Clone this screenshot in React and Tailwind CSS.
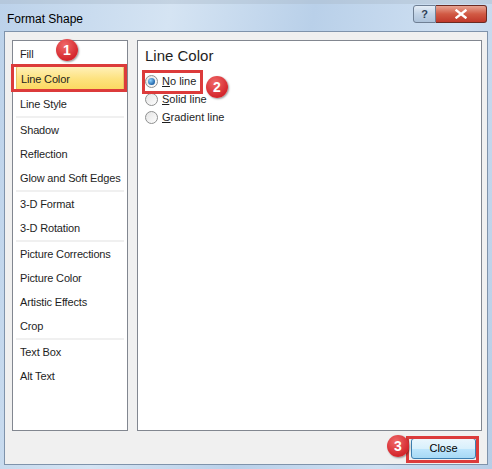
import React from 'react';

const groups = [
  ['Fill', 'Line Color', 'Line Style'],
  ['Shadow', 'Reflection', 'Glow and Soft Edges'],
  ['3-D Format', '3-D Rotation'],
  ['Picture Corrections', 'Picture Color', 'Artistic Effects', 'Crop'],
  ['Text Box', 'Alt Text'],
];

function Badge({ n, className }) {
  return (
    <div
      className={
        'absolute w-[22px] h-[22px] rounded-full bg-[radial-gradient(circle_at_40%_30%,#f06a6a,#d4262c_70%)] shadow-[1px_1px_2px_rgba(0,0,0,0.4)] flex items-center justify-center text-white text-[14px] font-bold ' +
        className
      }
    >
      {n}
    </div>
  );
}

function Radio({ checked, u, rest }) {
  return (
    <div className="flex items-center h-[18px] gap-[4px]">
      <div className="w-[13px] h-[13px] rounded-full border border-[#8e8f8f] bg-[linear-gradient(135deg,#e4e4e4,#fdfdfd)] flex items-center justify-center">
        {checked && <div className="w-[7px] h-[7px] rounded-full bg-[radial-gradient(circle_at_35%_35%,#8fd3ff,#1a5fa5_75%)]" />}
      </div>
      <span className="text-[11px] text-[#1e1e1e] whitespace-nowrap">
        <span className="underline">{u}</span>
        {rest}
      </span>
    </div>
  );
}

export default function App() {
  return (
    <div
      className="w-[492px] h-[469px] relative overflow-hidden flex flex-col bg-[linear-gradient(100deg,#bcd2ea_0%,#d5e4f3_30%,#b9d0e9_55%,#cfe0f2_80%,#b7cde6_100%)]"
      style={{ fontFamily: '"Liberation Sans", Arial, sans-serif' }}
    >
      {/* title bar */}
      <div className="h-[31px] flex items-start justify-between pl-[7px] pr-[5px] relative">
        <div className="absolute left-0 right-0 top-0 h-[4px] bg-[#a9b8c9]/40" />
        <span className="mt-[10px] text-[12px] text-black">Format Shape</span>
        <div className="flex mt-[5px]">
          <div className="w-[23px] h-[18px] rounded-l-[3px] border border-[#6f7f94] bg-[linear-gradient(#e6eef7,#c2d3e6_50%,#aec3da)] flex items-center justify-center text-[11px] font-bold text-[#2d3e55]">
            ?
          </div>
          <div className="w-[51px] h-[18px] rounded-r-[3px] border border-l-0 border-[#6b2a22] bg-[linear-gradient(#e8a493,#d15a44_50%,#c0382a)] flex items-center justify-center">
            <svg width="12" height="10" viewBox="0 0 12 10">
              <path d="M1.5 1.5 L10.5 8.5 M10.5 1.5 L1.5 8.5" stroke="#fff" strokeWidth="2.4" strokeLinecap="square" />
            </svg>
          </div>
        </div>
      </div>

      {/* client area */}
      <div className="flex-1 mx-[4px] mb-[4px] bg-[#f0f0f0] border border-[#7f93ab] flex flex-col">
        <div className="flex gap-[9px] pl-[7px] pr-[5px] pt-[8px]">
          {/* list */}
          <div className="w-[116px] h-[391px] bg-white border border-[#828790] px-[1px] pt-[1px]">
            {groups.map((g, gi) => (
              <div key={gi} className={gi > 0 ? 'border-t-2 border-[#f0f0f0] mx-[2px]' : 'mx-[2px]'}>
                {g.map((item) => (
                  <div
                    key={item}
                    className={
                      'h-[24px] flex items-center pl-[4px] text-[11px] text-[#1e1e1e] whitespace-nowrap tracking-[-0.15px] ' +
                      (item === 'Line Color'
                        ? 'rounded-[2px] border border-[#e5c365] bg-[linear-gradient(#fff0b8,#fde27e_50%,#fbd65c)] h-[26px]'
                        : '')
                    }
                  >
                    {item}
                  </div>
                ))}
              </div>
            ))}
          </div>

          {/* right panel */}
          <div className="flex-1 h-[391px] bg-white border border-[#828790] pl-[7px] pt-[5px]">
            <div className="text-[15px] text-[#1e1e1e] leading-[20px]">Line Color</div>
            <div className="mt-[6px] flex flex-col">
              <Radio checked u="N" rest="o line" />
              <Radio u="S" rest="olid line" />
              <Radio u="G" rest="radient line" />
            </div>
          </div>
        </div>

        <div className="flex justify-end pr-[11px] pt-[7px]">
          <div className="w-[65px] h-[21px] rounded-[3px] border border-[#3c7fb1] bg-[linear-gradient(#eaf6fd,#d9f0fc_50%,#bee6fd_51%,#a7d9f5)] flex items-center justify-center text-[11px] text-black">
            Close
          </div>
        </div>
      </div>

      {/* annotations */}
      <div className="absolute left-[11px] top-[64px] w-[116px] h-[28px] border-[3px] border-[#dc3b3b]" />
      <div className="absolute left-[142px] top-[70px] w-[61px] h-[24px] border-[3px] border-[#dc3b3b]" />
      <div className="absolute left-[406px] top-[436px] w-[73px] h-[27px] border-[3px] border-[#dc3b3b]" />
      <Badge n="1" className="left-[56px] top-[39px]" />
      <Badge n="2" className="left-[206px] top-[76px]" />
      <Badge n="3" className="left-[387px] top-[435px]" />
    </div>
  );
}
